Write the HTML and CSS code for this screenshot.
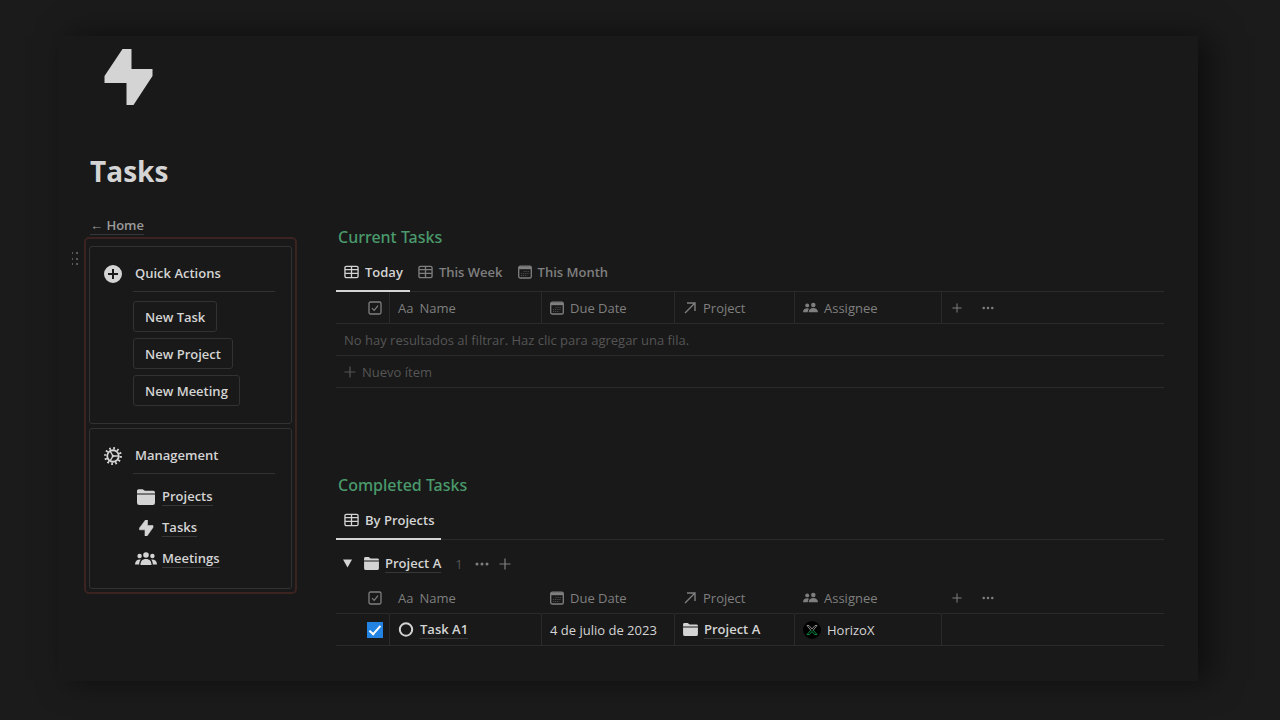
FILE: index.html
```html
<!DOCTYPE html>
<html lang="es">
<head>
    <meta charset="UTF-8">
    <meta name="viewport" content="width=device-width, initial-scale=1.0">
    <title>Tasks</title>
    <link rel="stylesheet" href="styles.css">
</head>
<body>
    <!-- shared icons -->
    <svg class="sprite" aria-hidden="true">
        <symbol id="bolt" viewBox="0 0 48 56">
            <path d="M18 0H27V20H48V27L29 56H22V34H0V27Z"/>
        </symbol>
        <symbol id="bolt-small" viewBox="0 0 18 16">
            <path d="M8.500 0H10.500V5.500H16V7.500L10 16H8V9.800H2.500V8Z" stroke="currentColor" stroke-width=".6"/>
        </symbol>
        <symbol id="plus-circle" viewBox="0 0 18 18">
            <path fill-rule="evenodd" d="M9 0a9 9 0 1 1 0 18A9 9 0 0 1 9 0ZM8 4v4H4v2h4v4h2v-4h4V8h-4V4Z"/>
        </symbol>
        <symbol id="gear" viewBox="0 0 20 20">
            <circle cx="10" cy="10" r="6.4" fill="none" stroke="currentColor" stroke-width="2"/>
            <circle cx="10" cy="10" r="8.600" fill="none" stroke="currentColor" stroke-width="2.600" stroke-dasharray="1.900 2.603"/>
            <path d="M10 10h6M10 10L7 4.800M10 10l-3 5.200" stroke="currentColor" stroke-width="1.500"/>
            <circle cx="10" cy="10" r="1.500"/>
        </symbol>
        <symbol id="folder" viewBox="0 0 16 14">
            <path d="M0 1.500Q0 0 1.500 0H5L7 1.500H14.500Q16 1.500 16 3V3.800H0ZM0 4.800H16V12Q16 14 14 14H2Q0 14 0 12Z"/>
        </symbol>
        <symbol id="team" viewBox="0 0 22 14">
            <circle cx="11" cy="3" r="2.800"/>
            <circle cx="4.600" cy="4" r="2.200"/>
            <circle cx="17.400" cy="4" r="2.200"/>
            <path d="M5.500 13C5.500 9 7.500 7 11 7s5.500 2 5.500 6ZM0 12.500C0 9 2 7.200 5.800 7.400 4.600 9 4.200 10.500 4.200 12.500ZM22 12.500C22 9 20 7.200 16.200 7.400 17.400 9 17.800 10.500 17.800 12.500Z"/>
        </symbol>
        <symbol id="grid" viewBox="0 0 16 14">
            <path d="M2.500 1H13.500Q15 1 15 2.500V11.500Q15 13 13.500 13H2.500Q1 13 1 11.500V2.500Q1 1 2.500 1ZM1 4.500H15M1 8.500H15M8 1V13" fill="none" stroke="currentColor" stroke-width="1.400"/>
        </symbol>
        <symbol id="calendar" viewBox="0 0 14 14">
            <rect x=".7" y="1.200" width="12.600" height="11.800" rx="1.600" fill="none" stroke="currentColor" stroke-width="1.300"/>
            <path d="M1 1.500H13V4.200H1Z"/>
            <path d="M5.500 6.500H11.500M3 8.500H11.500M3 10.500H9.500" stroke="currentColor" stroke-width="1" stroke-dasharray="1.200 .9" opacity=".5"/>
        </symbol>
        <symbol id="check-box" viewBox="0 0 14 14">
            <rect x="1" y="1" width="12" height="12" rx="1.500" fill="none" stroke="currentColor" stroke-width="1.300"/>
            <path d="M4 7.200L6.200 9.400L10 4.600" fill="none" stroke="currentColor" stroke-width="1.200"/>
        </symbol>
        <symbol id="arrow" viewBox="0 0 14 14">
            <path d="M2 12L11.500 2.500M4 2H12V10" fill="none" stroke="currentColor" stroke-width="1.400"/>
        </symbol>
        <symbol id="people" viewBox="0 0 16 12">
            <circle cx="4.500" cy="3.200" r="2.100"/>
            <circle cx="11" cy="2.700" r="2.400"/>
            <path d="M0 10.500C0 7.800 1.800 6.200 4.500 6.200Q5.600 6.200 6.400 6.700 5 8.300 5 10.500ZM6 10.500C6 7.800 8 6 11 6s5 1.800 5 4.500Z"/>
        </symbol>
        <symbol id="plus" viewBox="0 0 12 12">
            <path d="M6 .5V11.500M.5 6H11.500" stroke="currentColor" stroke-width="1.200"/>
        </symbol>
        <symbol id="dots" viewBox="0 0 14 4">
            <circle cx="2" cy="2" r="1.500"/><circle cx="7" cy="2" r="1.500"/><circle cx="12" cy="2" r="1.500"/>
        </symbol>
    </svg>

    <main class="page">
        <svg class="page-icon"><use href="#bolt"/></svg>
        <h1>Tasks</h1>

        <div class="columns">
            <aside class="sidebar">
                <div class="back"><a href="#">← Home</a></div>
                <div class="callout">
                    <svg class="handle" viewBox="0 0 6 14" aria-hidden="true">
                        <path d="M0 1h1M4 1h2M0 7h1M4 7h2M0 12h1M4 12h2" stroke="currentColor" stroke-width="2"/>
                    </svg>
                    <section class="card">
                        <svg class="card-icon"><use href="#plus-circle"/></svg>
                        <div class="card-body">
                            <h2>Quick Actions</h2>
                            <div class="actions">
                                <button type="button">New Task</button>
                                <button type="button">New Project</button>
                                <button type="button">New Meeting</button>
                            </div>
                        </div>
                    </section>
                    <section class="card">
                        <svg class="card-icon"><use href="#gear"/></svg>
                        <div class="card-body">
                            <h2>Management</h2>
                            <nav class="links">
                                <a href="#"><svg class="link-icon"><use href="#folder"/></svg><span>Projects</span></a>
                                <a href="#"><svg class="link-icon"><use href="#bolt-small"/></svg><span>Tasks</span></a>
                                <a href="#"><svg class="link-icon team"><use href="#team"/></svg><span>Meetings</span></a>
                            </nav>
                        </div>
                    </section>
                </div>
            </aside>

            <div class="content">
                <section class="database">
                    <h2>Current Tasks</h2>
                    <div class="tabs">
                        <button type="button" class="tab active"><svg class="grid-icon"><use href="#grid"/></svg>Today</button>
                        <button type="button" class="tab"><svg class="grid-icon"><use href="#grid"/></svg>This Week</button>
                        <button type="button" class="tab"><svg class="icon"><use href="#calendar"/></svg>This Month</button>
                    </div>
                    <table class="table">
                        <colgroup>
                            <col class="col-done"><col class="col-name"><col class="col-date"><col class="col-project"><col class="col-assignee"><col>
                        </colgroup>
                        <thead>
                            <tr>
                                <th class="done"><svg class="icon"><use href="#check-box"/></svg></th>
                                <th><div class="cell"><span class="aa">Aa</span>Name</div></th>
                                <th><div class="cell"><svg class="icon"><use href="#calendar"/></svg>Due Date</div></th>
                                <th><div class="cell"><svg class="icon"><use href="#arrow"/></svg>Project</div></th>
                                <th><div class="cell"><svg class="people-icon"><use href="#people"/></svg>Assignee</div></th>
                                <th>
                                    <div class="cell tools">
                                        <button type="button" aria-label="Add column"><svg class="plus-icon"><use href="#plus"/></svg></button>
                                        <button type="button" aria-label="More"><svg class="dots-icon"><use href="#dots"/></svg></button>
                                    </div>
                                </th>
                            </tr>
                        </thead>
                        <tbody class="empty">
                            <tr><td colspan="6">No hay resultados al filtrar. Haz clic para agregar una fila.</td></tr>
                            <tr><td colspan="6"><button type="button" class="new-item"><svg class="plus-icon"><use href="#plus"/></svg>Nuevo ítem</button></td></tr>
                        </tbody>
                    </table>
                </section>

                <section class="database">
                    <h2>Completed Tasks</h2>
                    <div class="tabs">
                        <button type="button" class="tab active"><svg class="grid-icon"><use href="#grid"/></svg>By Projects</button>
                    </div>
                    <div class="group">
                        <button type="button" class="toggle" aria-label="Toggle group"><svg viewBox="0 0 9 9"><path d="M0 0.500H9L4.500 8.500Z"/></svg></button>
                        <svg class="folder-icon"><use href="#folder"/></svg>
                        <a href="#">Project A</a>
                        <span class="count">1</span>
                        <button type="button" aria-label="More"><svg class="dots-icon"><use href="#dots"/></svg></button>
                        <button type="button" aria-label="Add"><svg class="plus-icon"><use href="#plus"/></svg></button>
                    </div>
                    <table class="table grouped">
                        <colgroup>
                            <col class="col-done"><col class="col-name"><col class="col-date"><col class="col-project"><col class="col-assignee"><col>
                        </colgroup>
                        <thead>
                            <tr>
                                <th class="done"><svg class="icon"><use href="#check-box"/></svg></th>
                                <th><div class="cell"><span class="aa">Aa</span>Name</div></th>
                                <th><div class="cell"><svg class="icon"><use href="#calendar"/></svg>Due Date</div></th>
                                <th><div class="cell"><svg class="icon"><use href="#arrow"/></svg>Project</div></th>
                                <th><div class="cell"><svg class="people-icon"><use href="#people"/></svg>Assignee</div></th>
                                <th>
                                    <div class="cell tools">
                                        <button type="button" aria-label="Add column"><svg class="plus-icon"><use href="#plus"/></svg></button>
                                        <button type="button" aria-label="More"><svg class="dots-icon"><use href="#dots"/></svg></button>
                                    </div>
                                </th>
                            </tr>
                        </thead>
                        <tbody>
                            <tr>
                                <td class="done"><input type="checkbox" aria-label="Task A1" checked></td>
                                <td><div class="cell"><svg class="status" viewBox="0 0 16 16"><circle cx="8" cy="7.500" r="6.200" fill="none" stroke="currentColor" stroke-width="2"/></svg><a href="#">Task A1</a></div></td>
                                <td><div class="cell">4 de julio de 2023</div></td>
                                <td><div class="cell"><svg class="folder-icon"><use href="#folder"/></svg><a href="#">Project A</a></div></td>
                                <td>
                                    <div class="cell">
                                        <svg class="avatar" viewBox="0 0 18 18">
                                            <circle cx="9" cy="9" r="9" fill="#000"/>
                                            <path d="M4 4.500H6L9 8L12 4.500H14L10 9.500M4 4.500L8 9.500" fill="none" stroke="#8a8a8a"/>
                                            <path d="M8 9L4 13.500H6.500L9 10.500L11.500 13.500H14L10 9" fill="none" stroke="#08843f"/>
                                        </svg>
                                        HorizoX
                                    </div>
                                </td>
                                <td></td>
                            </tr>
                        </tbody>
                    </table>
                </section>
            </div>
        </div>
    </main>
</body>
</html>
```
FILE: styles.css
```css
* {
    box-sizing: border-box;
}

body {
    margin: 0;
    padding: 36px 82px 39px 58px;
    background-color: #1b1b1b;
    color: #d4d4d4;
    font-family: "Open Sans", "Noto Sans", sans-serif;
    font-size: 13px;
    line-height: 20px;
}

h1,
h2 {
    margin: 0;
}

svg {
    display: block;
    flex: none;
    fill: currentColor;
}

button {
    padding: 0;
    border: none;
    background: none;
    color: inherit;
    font: inherit;
    cursor: pointer;
}

a {
    color: inherit;
    font-weight: 600;
    text-decoration: none;
}

.sprite {
    position: absolute;
    width: 0;
    height: 0;
}

.page {
    padding: 13px 34px 35px 26px;
    background-color: #191919;
    box-shadow: 12px 0 30px rgba(0, 0, 0, 0.5);
}

.page-icon {
    width: 49px;
    height: 56px;
    margin-left: 20px;
}

h1 {
    margin: 46px 0 24px 6px;
    font-size: 28px;
    line-height: 40px;
}

.columns {
    display: grid;
    grid-template-columns: 213px 1fr;
    gap: 39px;
}

/* left column */
.back {
    height: 22px;
    padding-left: 6px;
    color: #9b9b9b;
}

.back a,
.links span,
.group a,
.cell a {
    border-bottom: 1px solid #373737;
    line-height: 17px;
}

.back a {
    display: inline-block;
}

.callout {
    position: relative;
    display: flex;
    flex-direction: column;
    gap: 4px;
    padding: 7px 3px 3px;
    border: 2px solid #3b2320;
    border-radius: 5px;
}

.handle {
    position: absolute;
    left: -14px;
    top: 13px;
    width: 6px;
    height: 14px;
    color: #5a5a5a;
}

.card {
    display: flex;
    gap: 11px;
    padding: 16px 16px 14px 14px;
    border: 1px solid #323232;
    border-radius: 3px;
}

.card-icon {
    width: 18px;
    height: 18px;
    margin-top: 2px;
}

.card-body {
    flex: 1;
}

.card h2 {
    padding: 0 2px 8px;
    border-bottom: 1px solid #323232;
    font-size: 13px;
    font-weight: 600;
}

.actions {
    display: flex;
    flex-direction: column;
    align-items: flex-start;
    gap: 6px;
    padding: 9px 0 3px;
}

.actions button {
    height: 31px;
    padding: 0 11px;
    border: 1px solid #323232;
    border-radius: 3px;
    font-weight: 600;
}

.links {
    padding: 7px 0 0 4px;
}

.links a {
    display: flex;
    align-items: center;
    gap: 7px;
    height: 31px;
}

.link-icon {
    width: 18px;
    height: 16px;
}

.link-icon.team {
    width: 22px;
    margin: 0 -2px;
}

/* databases */
.database + .database {
    margin-top: 85px;
}

.database h2 {
    padding-left: 2px;
    color: #4a9a6c;
    font-family: "Noto Sans", "Open Sans", sans-serif;
    font-size: 16px;
    font-weight: 500;
    line-height: 24px;
}

.content {
    padding-top: 10px;
}

.tabs {
    display: flex;
    height: 43px;
    border-bottom: 1px solid #2a2a2a;
}

.tab {
    display: flex;
    align-items: center;
    gap: 6px;
    height: 43px;
    padding: 4px 7px 0 8px;
    border-bottom: 2px solid transparent;
    color: #7f7f7f;
    font-weight: 600;
}

.tab.active {
    border-color: #d4d4d4;
    color: #d4d4d4;
}

.icon {
    width: 14px;
    height: 14px;
}

.grid-icon {
    width: 15px;
    height: 14px;
}

.people-icon {
    width: 15px;
    height: 12px;
}

.folder-icon {
    width: 15px;
    height: 13px;
}

.plus-icon {
    width: 12px;
    height: 12px;
}

.dots-icon {
    width: 14px;
    height: 4px;
}

.table {
    width: 100%;
    border-spacing: 0;
    table-layout: fixed;
}

.col-done {
    width: 54px;
}

.col-name {
    width: 152px;
}

.col-date {
    width: 133px;
}

.col-project {
    width: 120px;
}

.col-assignee {
    width: 147px;
}

th,
td {
    height: 32px;
    padding: 0 8px;
    border-right: 1px solid #2a2a2a;
    border-bottom: 1px solid #2a2a2a;
    text-align: left;
    white-space: nowrap;
}

th {
    color: #7f7f7f;
    font-weight: 400;
}

.grouped th {
    border-right-color: transparent;
}

th:last-child,
td:last-child {
    border-right: none;
}

.done svg,
.done input {
    margin: 0 0 0 auto;
}

.done {
    padding-right: 7px;
}

td.done {
    padding-right: 6px;
}

.cell {
    display: flex;
    align-items: center;
    gap: 6px;
}

.tools {
    gap: 20px;
    padding-left: 2px;
}

.tools .plus-icon {
    width: 10px;
    height: 10px;
}

.tools .dots-icon {
    width: 12px;
}

.empty {
    color: #555;
}

.new-item {
    display: flex;
    align-items: center;
    gap: 6px;
}

.group {
    display: flex;
    align-items: center;
    gap: 6px;
    height: 42px;
    padding: 5px 7px 0;
}

.group button {
    margin-left: 4px;
    color: #7f7f7f;
}

.group .toggle {
    margin: 0 6px 0 0;
    color: #d4d4d4;
}

.toggle svg {
    width: 9px;
    height: 9px;
}

.count {
    margin: 0 2px 0 8px;
    color: #555;
}

input[type="checkbox"] {
    display: flex;
    width: 16px;
    height: 16px;
    appearance: none;
    background-color: #2383e2;
}

input[type="checkbox"]:checked::before {
    content: "";
    width: 6px;
    height: 10px;
    margin: 1px 5px;
    border: solid #fff;
    border-width: 0 2px 2px 0;
    transform: rotate(42deg);
}

.status {
    width: 16px;
    height: 16px;
}

.avatar {
    width: 18px;
    height: 18px;
}
```
